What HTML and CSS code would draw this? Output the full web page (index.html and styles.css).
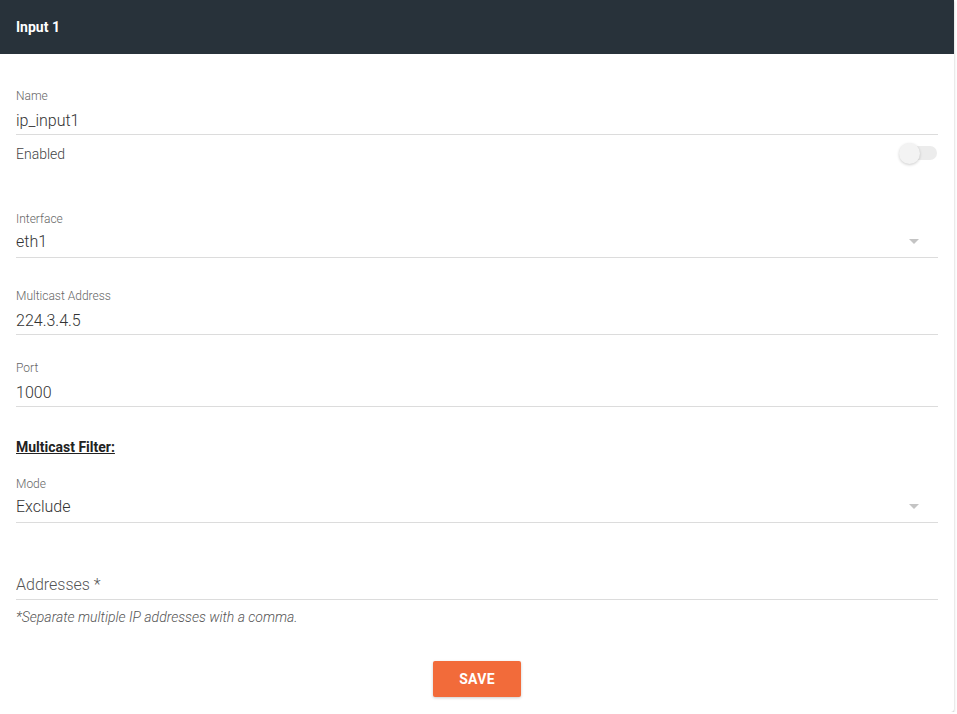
FILE: index.html
```html
<!DOCTYPE html>
<html>
<head>
    <title>Input 1</title>
    <link rel="stylesheet" href="styles.css">
</head>
<body>
    <div class="card">
        <div class="card-header">Input 1</div>

        <div class="card-body">
            <div class="field field-name">
                <div class="field-label">Name</div>
                <div class="field-value">ip_input1</div>
            </div>

            <div class="switch-row">
                <span class="switch-label">Enabled</span>
                <span class="switch">
                    <span class="switch-track"></span>
                    <span class="switch-thumb"></span>
                </span>
            </div>

            <div class="field field-select field-interface">
                <div class="field-label">Interface</div>
                <div class="field-value">
                    <span>eth1</span>
                    <span class="select-arrow"></span>
                </div>
            </div>

            <div class="field field-multicast">
                <div class="field-label">Multicast Address</div>
                <div class="field-value">224.3.4.5</div>
            </div>

            <div class="field field-port">
                <div class="field-label">Port</div>
                <div class="field-value">1000</div>
            </div>

            <div class="section-title">Multicast Filter:</div>

            <div class="field field-select field-mode">
                <div class="field-label">Mode</div>
                <div class="field-value">
                    <span>Exclude</span>
                    <span class="select-arrow"></span>
                </div>
            </div>

            <div class="field field-addresses">
                <div class="field-value placeholder">Addresses *</div>
            </div>
            <div class="helper-text">*Separate multiple IP addresses with a comma.</div>

            <div class="actions">
                <button class="save-button">SAVE</button>
            </div>
        </div>
    </div>
</body>
</html>
```

FILE: styles.css
```css
body {
    font-family: 'Roboto', Arial, sans-serif;
    background-color: #ffffff;
    color: #333;
    margin: 0;
}
.card {
    width: 954px;
    background-color: #fff;
    box-shadow: 0 1px 3px rgba(0, 0, 0, 0.22), 0 1px 1px rgba(0, 0, 0, 0.1);
    border-radius: 0 0 3px 0;
}
.card-header {
    height: 54px;
    background-color: #28323a;
    color: #fff;
    font-size: 14px;
    font-weight: 700;
    display: flex;
    align-items: center;
    padding: 0 16px;
}
.card-body {
    padding: 35px 16px 15px 16px;
}
.field {
    border-bottom: 1px solid #dcdcdc;
}
.field-label {
    font-size: 12px;
    line-height: 14px;
    font-weight: 300;
    color: #666;
    margin-bottom: 8px;
}
.field-value {
    font-size: 16px;
    line-height: 19px;
    font-weight: 300;
    color: #333;
    padding-bottom: 4px;
    display: flex;
    align-items: center;
    justify-content: space-between;
}
.field-select .field-label {
    margin-bottom: 6px;
}
.field-select .field-value {
    padding-bottom: 6px;
}
.select-arrow {
    width: 0;
    height: 0;
    border-left: 5px solid transparent;
    border-right: 5px solid transparent;
    border-top: 5px solid #c4c4c4;
    margin-right: 19px;
}
.switch-row {
    display: flex;
    justify-content: space-between;
    align-items: flex-start;
    margin-top: 8px;
}
.switch-label {
    font-size: 14px;
    line-height: 16px;
    font-weight: 300;
    color: #444;
    padding-top: 3px;
}
.switch {
    position: relative;
    width: 38px;
    height: 20px;
    margin-right: 1px;
}
.switch-track {
    position: absolute;
    left: 3px;
    top: 3px;
    width: 35px;
    height: 14px;
    border-radius: 7px;
    background-color: #ececec;
}
.switch-thumb {
    position: absolute;
    left: 0;
    top: 0;
    width: 21px;
    height: 21px;
    border-radius: 50%;
    background-color: #f3f3f3;
    box-shadow: 0 1px 3px rgba(0, 0, 0, 0.2);
}
.field-interface {
    margin-top: 49px;
}
.field-multicast {
    margin-top: 31px;
}
.field-port {
    margin-top: 26px;
}
.section-title {
    margin-top: 32px;
    font-size: 14px;
    line-height: 16px;
    font-weight: 700;
    color: #222;
    text-decoration: underline;
}
.field-mode {
    margin-top: 22px;
}
.field-addresses {
    margin-top: 52px;
}
.field-addresses .field-value {
    padding-bottom: 5px;
}
.placeholder {
    color: #555;
}
.helper-text {
    margin-top: 9px;
    font-size: 14px;
    line-height: 16px;
    font-weight: 300;
    font-style: italic;
    color: #555;
}
.actions {
    display: flex;
    justify-content: center;
    margin-top: 36px;
}
.save-button {
    font-family: 'Roboto', Arial, sans-serif;
    background-color: #f26b3a;
    color: #fff;
    border: none;
    border-radius: 2px;
    width: 88px;
    height: 36px;
    font-size: 14px;
    font-weight: 700;
    letter-spacing: 0.3px;
    box-shadow: 0 1px 3px rgba(0, 0, 0, 0.2);
    cursor: pointer;
}
```
